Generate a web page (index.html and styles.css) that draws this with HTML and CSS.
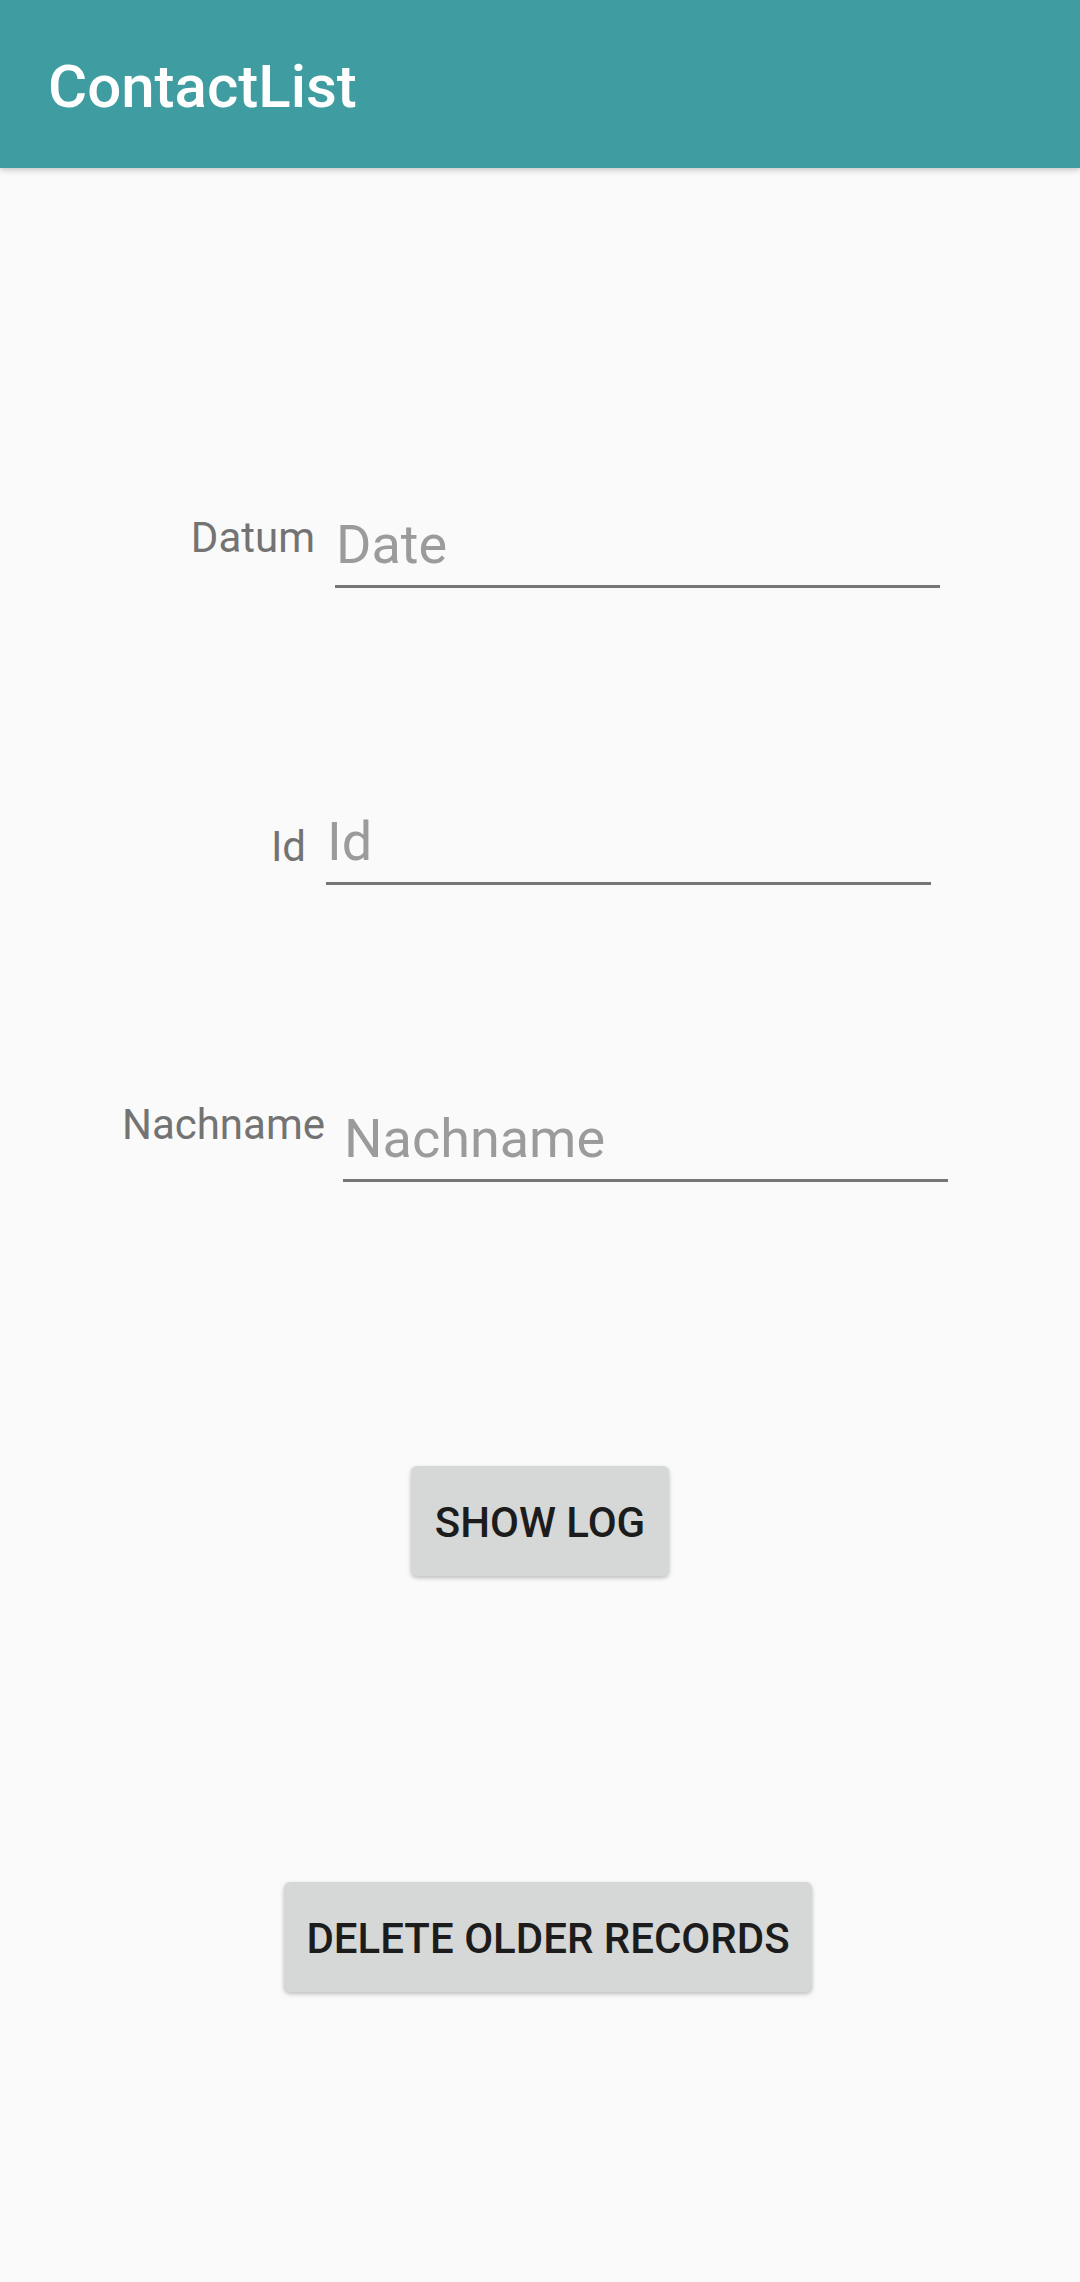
FILE: index.html
```html
<!DOCTYPE html>
<html lang="de">
<head>
<meta charset="utf-8">
<title>ContactList</title>
<link rel="stylesheet" href="styles.css">
</head>
<body>
<header class="appbar">
  <h1 class="appbar-title">ContactList</h1>
</header>
<main class="content">
  <div class="row row-datum">
    <label class="field-label label-datum" for="date">Datum</label>
    <input class="field-input" id="date" type="text" placeholder="Date">
  </div>
  <div class="row row-id">
    <label class="field-label label-id" for="id">Id</label>
    <input class="field-input" id="id" type="text" placeholder="Id">
  </div>
  <div class="row row-name">
    <label class="field-label label-name" for="name">Nachname</label>
    <input class="field-input" id="name" type="text" placeholder="Nachname">
  </div>
  <div class="actions">
    <button class="btn btn-log" type="button">Show Log</button>
    <button class="btn btn-delete" type="button">Delete older records</button>
  </div>
</main>
</body>
</html>
```
FILE: styles.css
```css
* { box-sizing: border-box; }
html, body {
  margin: 0;
  padding: 0;
  background: #fafafa;
  font-family: Roboto, "Noto Sans", "Liberation Sans", sans-serif;
}
body {
  width: 1080px;
  min-height: 2282px;
}
.appbar {
  height: 168px;
  background: #3f9ca0;
  padding: 6px 0 0 48px;
  box-shadow: 0 2px 6px rgba(0, 0, 0, 0.22);
  position: relative;
  z-index: 1;
}
.appbar-title {
  margin: 0;
  font-size: 60px;
  font-weight: 500;
  line-height: 162px;
  color: #ffffff;
}
.content {
  display: flex;
  flex-direction: column;
  padding-top: 344px;
}
.row {
  display: flex;
  align-items: flex-start;
  margin-bottom: 221px;
}
.row-datum { padding-left: 95px; gap: 20px; }
.row-id { padding-left: 86px; gap: 20px; }
.row-name { padding-left: 105px; gap: 18px; }
.field-label {
  width: 220px;
  text-align: right;
  font-size: 42px;
  line-height: 50px;
  color: #737373;
}
.label-datum { margin-top: 1px; }
.label-id { margin-top: 13px; }
.label-name { margin-top: -6px; }
.field-input {
  width: 605px;
  height: 76px;
  margin: 0;
  padding: 0 0 9px 1px;
  border: none;
  border-bottom: 3px solid #767676;
  background: transparent;
  font-family: inherit;
  font-size: 54px;
  line-height: 64px;
  color: #212121;
  outline: none;
}
.field-input::placeholder {
  color: #9b9b9b;
  opacity: 1;
}
.actions {
  display: flex;
  flex-direction: column;
  align-items: center;
  margin-top: 63px;
  gap: 306px;
}
.btn {
  height: 110px;
  padding: 3px 24px 0;
  border: none;
  border-radius: 6px;
  background: #d6d7d7;
  box-shadow: 0 2px 4px rgba(0, 0, 0, 0.25);
  font-family: inherit;
  font-size: 42px;
  font-weight: 500;
  line-height: 107px;
  text-transform: uppercase;
  color: #1c1c1c;
  letter-spacing: 0;
}
.btn-delete {
  margin-left: 16px;
  padding: 3px 22px 0;
}
```
